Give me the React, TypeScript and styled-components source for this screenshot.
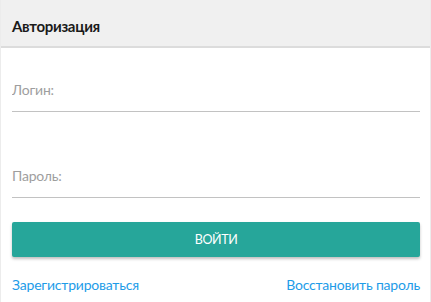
import React from 'react';
import styled, { createGlobalStyle } from 'styled-components';

const GlobalStyle = createGlobalStyle`
  body {
    margin: 0;
    background: #fff;
    font-family: Lato, 'Noto Sans', sans-serif;
  }
`;

const Card = styled.div`
  width: 431px;
  height: 302px;
  box-sizing: border-box;
  border-left: 1px solid #ececec;
  border-right: 1px solid #ececec;
  background: #fff;
`;

const Header = styled.div`
  height: 48px;
  box-sizing: border-box;
  display: flex;
  align-items: center;
  padding: 6px 11px 0;
  background: #f0f0f0;
  border-bottom: 2px solid #dcdcdc;
`;

const Title = styled.h3`
  margin: 0;
  font-size: 15px;
  font-weight: 700;
  letter-spacing: -0.3px;
  color: #1a1a1a;
`;

const Body = styled.div`
  display: flex;
  flex-direction: column;
  padding: 0 10px 0 11px;
`;

const Input = styled.input<{ $top: number }>`
  margin-top: ${(p) => p.$top}px;
  height: 40px;
  box-sizing: border-box;
  padding: 0 0 5px;
  border: none;
  border-bottom: 1px solid #c2c2c2;
  outline: none;
  font: inherit;
  font-size: 14px;
  letter-spacing: -0.2px;
  color: #333;
  background: transparent;
  &::placeholder {
    color: #9e9e9e;
  }
`;

const Button = styled.button`
  margin-top: 24px;
  height: 35px;
  border: none;
  border-radius: 2px;
  background: #26a69a;
  color: #fff;
  font: inherit;
  font-size: 12.5px;
  letter-spacing: -0.4px;
  text-transform: uppercase;
  box-shadow: 0 2px 3px rgba(0, 0, 0, 0.25);
`;

const Links = styled.div`
  margin-top: 18px;
  display: flex;
  justify-content: space-between;
  line-height: 20px;
`;

const Link = styled.a`
  color: #1e9ce8;
  font-size: 14px;
  letter-spacing: -0.2px;
  text-decoration: none;
`;

export default function App() {
  return (
    <>
      <GlobalStyle />
      <Card>
        <Header>
          <Title>Авторизация</Title>
        </Header>
        <Body>
          <Input $top={24} placeholder="Логин:" />
          <Input $top={46} type="password" placeholder="Пароль:" />
          <Button>Войти</Button>
          <Links>
            <Link href="#">Зарегистрироваться</Link>
            <Link href="#">Восстановить пароль</Link>
          </Links>
        </Body>
      </Card>
    </>
  );
}
